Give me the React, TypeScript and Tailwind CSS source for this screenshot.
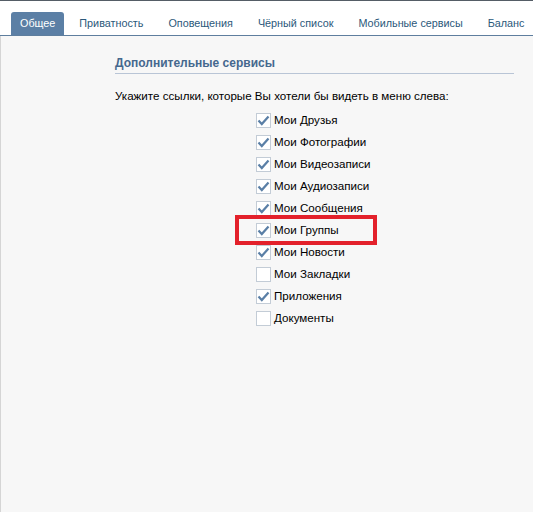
import { useState } from 'react';

const tabs = ['Общее', 'Приватность', 'Оповещения', 'Чёрный список', 'Мобильные сервисы', 'Баланс'];

const items: [string, boolean][] = [
  ['Мои Друзья', true],
  ['Мои Фотографии', true],
  ['Мои Видеозаписи', true],
  ['Мои Аудиозаписи', true],
  ['Мои Сообщения', true],
  ['Мои Группы', true],
  ['Мои Новости', true],
  ['Мои Закладки', false],
  ['Приложения', true],
  ['Документы', false],
];

const CheckRow = ({ label, checked }: { label: string; checked: boolean }) => (
  <div className="flex h-[22px] items-center">
    <span className="flex h-[15px] w-[15px] items-center justify-center border border-[#c3ccd6] bg-white">
      {checked && (
        <svg width="13" height="11" viewBox="0 0 13 11">
          <path d="M1.5 5.5 L4.8 9 L11.5 1.5" fill="none" stroke="#5a7fa6" strokeWidth="2.2" />
        </svg>
      )}
    </span>
    <span className="ml-[3px] text-[11.6px] leading-[14px] text-[#000]">{label}</span>
  </div>
);

const App = () => {
  const [active] = useState(0);

  return (
    <div
      className="flex h-[512px] w-[533px] flex-col overflow-hidden bg-white"
      style={{ fontFamily: '"Liberation Sans", Arial, sans-serif' }}
    >
      <div className="h-px bg-[#555d66]" />
      <nav className="flex h-[35px] items-end border-b border-[#5e7e9e] pl-[11px]">
        {tabs.map((t, i) => (
          <div
            key={t}
            className={
              i === active
                ? 'mr-[5px] flex h-[23px] items-center rounded-t-[3px] bg-[#5b7fa5] px-[9px] text-[10.8px] text-white'
                : 'mr-[5px] flex h-[23px] items-center px-[10px] text-[10.8px] text-[#2b587a]'
            }
          >
            <span className="whitespace-nowrap">{t}</span>
          </div>
        ))}
      </nav>

      <main className="flex-1 border-l border-[#d5d5d5] bg-[#f7f7f7] pl-[114px] pr-[19px] pt-[19px]">
        <h2 className="border-b border-[#b9c5d6] pb-[2px] text-[12px] font-bold leading-[16px] text-[#45688e]">
          Дополнительные сервисы
        </h2>
        <p className="mt-[15px] text-[11.6px] leading-[14px] text-[#000]">
          Укажите ссылки, которые Вы хотели бы видеть в меню слева:
        </p>
        <div className="mt-[6px] flex flex-col pl-[141px]">
          {items.map(([label, checked]) =>
            label === 'Мои Группы' ? (
              <div key={label} className="relative">
                <CheckRow label={label} checked={checked} />
                <div className="pointer-events-none absolute -left-[21px] top-[-4px] h-[30px] w-[142px] border-[4px] border-[#e3212b]" />
              </div>
            ) : (
              <CheckRow key={label} label={label} checked={checked} />
            )
          )}
        </div>
      </main>
    </div>
  );
};

export default App;
